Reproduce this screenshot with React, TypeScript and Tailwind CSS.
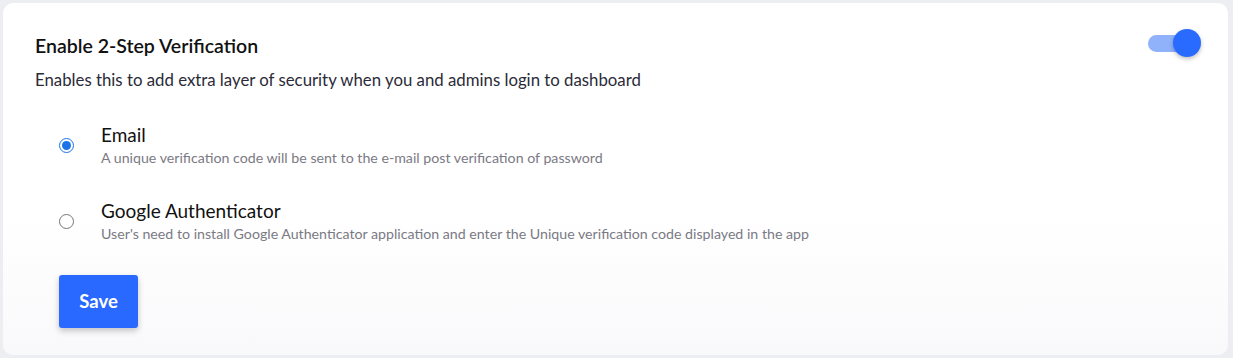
import { useState } from "react";

const options = [
  {
    id: "email",
    label: "Email",
    desc: "A unique verification code will be sent to the e-mail post verification of password",
  },
  {
    id: "google",
    label: "Google Authenticator",
    desc: "User's need to install Google Authenticator application and enter the Unique verification code displayed in the app",
  },
];

export default function App() {
  const [enabled, setEnabled] = useState(true);
  const [method, setMethod] = useState("email");

  return (
    <div
      className="w-[1233px] h-[358px] bg-[#eceef2] p-[3px] pr-[5px]"
      style={{ fontFamily: "Lato, 'Noto Sans', sans-serif" }}
    >
      <div className="h-full rounded-[10px] bg-gradient-to-b from-white from-60% to-[#f9f9fb] pl-[32px] pr-[28px] pt-[30px] relative">
        {/* Toggle */}
        <button
          onClick={() => setEnabled(!enabled)}
          className="absolute right-[24px] top-[24px] w-[56px] h-[32px] flex items-center"
          aria-label="Toggle 2-step"
        >
          <span className="absolute left-0 w-[40px] h-[17px] rounded-full bg-[#8fb2fb]" />
          <span
            className={`absolute w-[28px] h-[28px] rounded-full bg-[#2a6bff] shadow-[0_2px_4px_rgba(0,0,0,0.25)] ${
              enabled ? "left-[25px]" : "left-0"
            }`}
          />
        </button>

        <h1 className="text-[19.5px] font-semibold text-[#111] leading-[26px]">
          Enable 2-Step Verification
        </h1>
        <p className="mt-[9px] text-[16.8px] text-[#2b2b38] leading-[24px]">
          Enables this to add extra layer of security when you and admins login to dashboard
        </p>

        <div className="mt-[30px] flex flex-col gap-[30px] pl-[24px]">
          {options.map((o) => (
            <label key={o.id} className="flex items-center cursor-pointer">
              <span className="w-[42px] flex pt-[1px]">
                <input
                  type="radio"
                  name="method"
                  checked={method === o.id}
                  onChange={() => setMethod(o.id)}
                  className="w-[15px] h-[15px] accent-[#1a73e8]"
                />
              </span>
              <span className="flex flex-col">
                <span className="text-[19px] text-[#111] leading-[26px]">{o.label}</span>
                <span className="text-[14.2px] text-[#7a7a84] leading-[20px]">{o.desc}</span>
              </span>
            </label>
          ))}
        </div>

        <button className="mt-[31px] ml-[24px] w-[79px] h-[53px] rounded-[3px] bg-[#2a69ff] text-white font-bold text-[18.5px] shadow-[0_3px_6px_rgba(0,0,0,0.22)]">
          Save
        </button>
      </div>
    </div>
  );
}
